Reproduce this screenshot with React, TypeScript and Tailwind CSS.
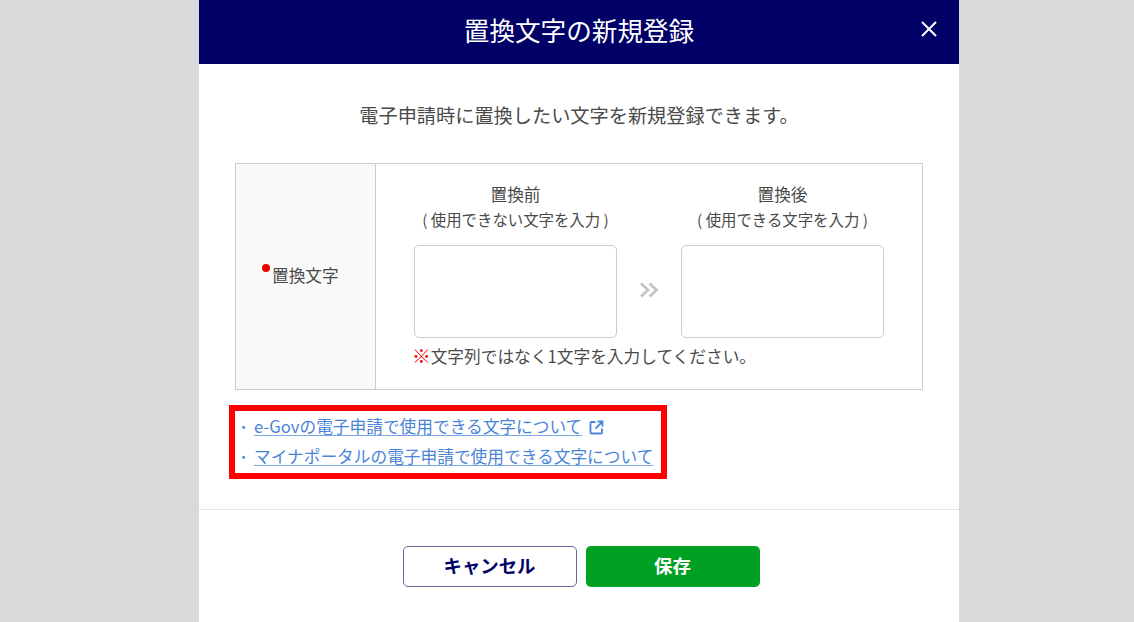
import React from 'react';

const font = { fontFamily: '"Noto Sans CJK JP", sans-serif' };

function Column({ title, note }: { title: string; note: string }) {
  return (
    <div className="w-[203px] flex flex-col items-center">
      <div className="h-[24px] mt-[1px] leading-[24px] text-[16.7px] text-[#4a4a4a]">{title}</div>
      <div className="h-[26px] leading-[26px] text-[15.4px] text-[#4a4a4a] whitespace-nowrap">{note}</div>
      <div className="mt-[13px] w-full h-[93px] bg-white border border-[#ccc] rounded-[5px]" />
    </div>
  );
}

export default function App() {
  return (
    <div className="w-[1134px] h-[622px] overflow-hidden bg-[#d9d9d9] flex" style={font}>
      <div className="ml-[199px] w-[760px] h-full bg-white flex flex-col">
        <div className="relative h-[64px] shrink-0 bg-[#000066] flex items-center justify-center pb-[3px]">
          <h1 className="text-[25.6px] text-white font-normal">置換文字の新規登録</h1>
          <button className="absolute left-[721px] top-[20px] text-white">
            <svg width="18" height="18" viewBox="0 0 18 18" fill="none" stroke="currentColor" strokeWidth="2">
              <path d="M2 2 16 16M16 2 2 16" />
            </svg>
          </button>
        </div>

        <p className="mt-[36px] h-[30px] leading-[30px] text-center text-[19.2px] text-[#4a4a4a]">
          電子申請時に置換したい文字を新規登録できます。
        </p>

        <div className="mt-[33px] mx-[36px] h-[227px] border border-[#ccc] flex">
          <div className="w-[140px] shrink-0 bg-[#f9f9f9] border-r border-[#ccc] flex items-center pl-[26px] pb-[2px]">
            <span className="w-[8px] h-[8px] rounded-full bg-[#ee0000] -mt-[15px] mr-[2px]" />
            <span className="text-[16.7px] text-[#4a4a4a]">置換文字</span>
          </div>
          <div className="flex-1 pt-[17px] pl-[38px] flex flex-col">
            <div className="flex items-start">
              <Column title="置換前" note="( 使用できない文字を入力 )" />
              <div className="w-[64px] flex justify-center pt-[101px]">
                <svg width="20" height="16" viewBox="0 0 20 16" fill="none" stroke="#c4c4c4" strokeWidth="2.8">
                  <path d="M2 1.5 9 8 2 14.5M10.5 1.5 17.5 8 10.5 14.5" />
                </svg>
              </div>
              <Column title="置換後" note="( 使用できる文字を入力 )" />
            </div>
            <p className="mt-[4px] h-[26px] leading-[26px] text-[16.7px] text-[#4a4a4a] whitespace-nowrap">
              <span className="text-[#ee0000] font-bold text-[18.7px] -ml-[2px]">※</span>
              <span>文字列ではなく1文字を入力してください。</span>
            </p>
          </div>
        </div>

        <div className="mt-[15px] ml-[30px] w-[438px] h-[74px] border-[6px] border-[#ff0000] flex flex-col justify-center gap-[6px] pl-[4px]">
          <div className="h-[24px] flex items-center text-[16.7px] text-[#4a84d9]">
            <span className="w-[15px] text-[13px] -ml-[2px] mr-[2px]">・</span>
            <a className="underline underline-offset-2 decoration-[#7aa7e6] whitespace-nowrap">e-Govの電子申請で使用できる文字について</a>
            <svg className="ml-[7px] mt-[1px]" width="15" height="15" viewBox="0 0 15 15" fill="none" stroke="#4a84d9" strokeWidth="1.8">
              <path d="M6.5 2H2.5A1 1 0 0 0 1.5 3V12.5A1 1 0 0 0 2.5 13.5H12A1 1 0 0 0 13 12.5V8.5M8.5 1.5H13.5V6.5M13.2 1.8 6.5 8.5" />
            </svg>
          </div>
          <div className="h-[24px] flex items-center text-[16.7px] text-[#4a84d9]">
            <span className="w-[15px] text-[13px] -ml-[2px] mr-[2px]">・</span>
            <a className="underline underline-offset-2 decoration-[#7aa7e6] whitespace-nowrap">マイナポータルの電子申請で使用できる文字について</a>
          </div>
        </div>

        <div className="mt-[30px] border-t border-[#e5e5e5] flex justify-center gap-[9px] pt-[36px] pl-[4px]">
          <button className="w-[174px] h-[41px] pb-[2px] bg-white border border-[#666699] rounded-[5px] text-[#000066] text-[18.4px] font-bold">
            キャンセル
          </button>
          <button className="w-[174px] h-[41px] pb-[2px] bg-[#00a122] rounded-[5px] text-white text-[18.4px] font-bold">
            保存
          </button>
        </div>
      </div>
    </div>
  );
}
